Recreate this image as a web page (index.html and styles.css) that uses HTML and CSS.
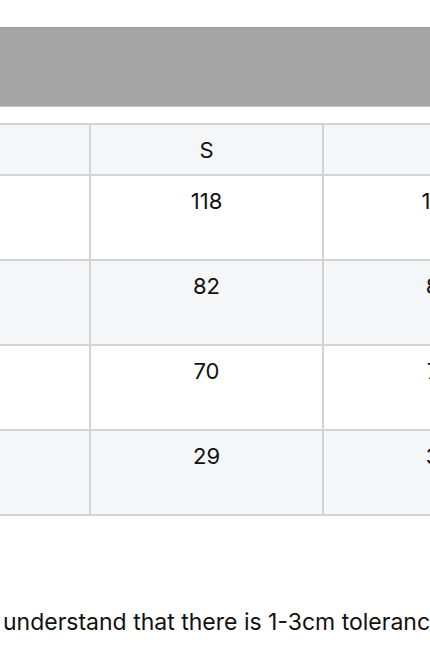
FILE: index.html
```html
<!DOCTYPE html>
<html>
<head>
<meta charset="utf-8">
<link rel="stylesheet" href="styles.css">
</head>
<body>
<div class="page">
  <div class="banner"></div>
  <table class="size-table">
    <tr class="head">
      <td class="c1"></td>
      <td class="c2">S</td>
      <td class="c3">M</td>
    </tr>
    <tr class="odd">
      <td class="c1"></td>
      <td class="c2">118</td>
      <td class="c3">122</td>
    </tr>
    <tr class="even">
      <td class="c1"></td>
      <td class="c2">82</td>
      <td class="c3">86</td>
    </tr>
    <tr class="odd">
      <td class="c1"></td>
      <td class="c2">70</td>
      <td class="c3">74</td>
    </tr>
    <tr class="even">
      <td class="c1"></td>
      <td class="c2">29</td>
      <td class="c3">30</td>
    </tr>
  </table>
  <p class="note">understand that there is 1-3cm tolerance due to manual measurement.</p>
</div>
</body>
</html>
```
FILE: styles.css
```css
html, body {
  margin: 0;
  padding: 0;
  background: #ffffff;
  overflow: hidden;
}
.page {
  width: 430px;
  height: 645px;
  padding-top: 27px;
  box-sizing: border-box;
  font-family: Inter, "Noto Sans", sans-serif;
  color: #111111;
  overflow: hidden;
}
.banner {
  height: 80px;
  width: 700px;
  background: #a5a5a5;
  border-top: 1px solid #9c9c9c;
  border-bottom: 1px solid #c4c4c4;
  box-sizing: border-box;
}
.size-table {
  margin-top: 16px;
  border-collapse: collapse;
  table-layout: fixed;
  width: 556px;
}
.size-table td {
  border: 2px solid #d3d3d3;
  text-align: center;
  vertical-align: top;
  font-size: 22px;
  line-height: 26px;
  padding: 12px 0 0;
  box-sizing: border-box;
}
.size-table td.c1 {
  width: 90px;
  border-left: none;
}
.size-table td.c2 {
  width: 233px;
}
.size-table td.c3 {
  width: 233px;
}
.size-table .head td {
  height: 51px;
  padding: 0;
  vertical-align: middle;
  background: #f5f6f8;
}
.size-table .odd td {
  height: 85px;
  background: #ffffff;
}
.size-table .even td {
  height: 85px;
  background: #f5f6f8;
}
.note {
  margin: 92px 0 0;
  padding-left: 3px;
  font-size: 23px;
  line-height: 28px;
  white-space: nowrap;
  color: #111111;
}
```
